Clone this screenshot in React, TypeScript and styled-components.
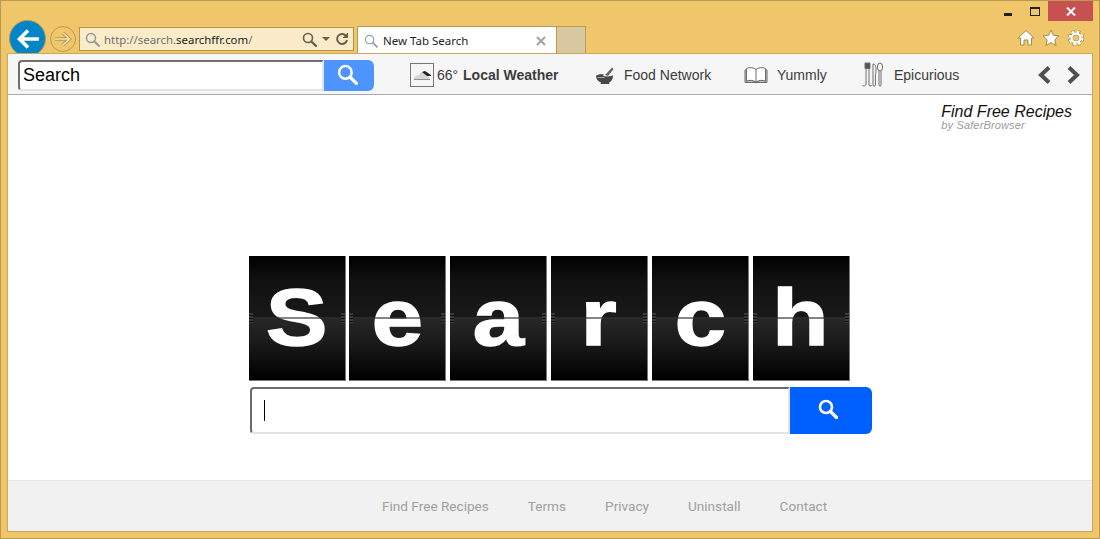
import React from "react";
import styled, { createGlobalStyle } from "styled-components";

const FLIP_LETTERS = ["S", "e", "a", "r", "c", "h"];
const FOOTER_LINKS = ["Find Free Recipes", "Terms", "Privacy", "Uninstall", "Contact"];

const GlobalStyle = createGlobalStyle`
  html, body {
    margin: 0;
    padding: 0;
    overflow: hidden;
  }
  * {
    box-sizing: border-box;
  }
  body {
    font-family: "Liberation Sans", Arial, sans-serif;
  }
`;

const Lens = ({ size, color, width = 2 }: { size: number; color: string; width?: number }) => (
  <svg width={size} height={size} viewBox="0 0 20 20" fill="none" stroke={color}>
    <circle cx="8" cy="8" r="6" strokeWidth={width} />
    <path d="M12.6 12.6 18.5 18.5" strokeWidth={width + 0.8} strokeLinecap="round" />
  </svg>
);

const WeatherIcon = () => (
  <svg width="22" height="22" viewBox="0 0 22 22">
    <path d="M3 14c1-2 3-3 5-3 1-2 3-4 5-3l3 3 3 3v1H3z" fill="#d5d5d5" />
    <path d="M3 15h16v1H3z" fill="#8e8e8e" />
    <path d="M11 8l3-1 6 4v1h-4z" fill="#222" />
  </svg>
);

const MortarIcon = () => (
  <svg width="20" height="20" viewBox="0 0 20 20">
    <path d="M10 10 17 2.500l1.600 1.600L13 11z" fill="#666" />
    <path d="M1 10.500c3-1.400 6-1.400 8-1l-1 1.600 5 .4 5-1c0 4-2 6.200-4 7l.4 1.500H5.600L6 17.500C3 16.500 1 14 1 10.500z" fill="#484848" />
    <path d="M2.500 12h7v1h-7z" fill="#a8a8a8" />
  </svg>
);

const BookIcon = () => (
  <svg width="24" height="18" viewBox="0 0 24 18" fill="#fff" stroke="#6c6c6c" strokeWidth="1">
    <path d="M1 16V4l1.500-.5V15c3-.8 6.500-.8 9.500 1 3-1.800 6.500-1.800 9.500-1V3.500L23 4v12.500H1z" fill="#c8c8c8" />
    <path d="M2.500 15V2.500C6 1 9.500 1.500 12 3.500 14.500 1.500 18 1 21.500 2.500V15c-3-1-6.500-1-9.500 1-3-2-6.500-2-9.500-1z" />
    <path d="M12 3.500V16" />
  </svg>
);

const UtensilsIcon = () => (
  <svg width="22" height="26" viewBox="0 0 22 26" fill="none" stroke="#6e6e6e" strokeWidth="1">
    <path d="M3 1h5v5.500H3z" fill="#555" />
    <path d="M4 6.500V22c0 2-2.500 2.500-3.500 1.500M7 6.500V23c0 1.500 2.500 1.500 2.500 0" />
    <path d="M11 2c2.500 0 3 3 3 6s-.6 4-.6 5V23c0 1.500-2.400 1.500-2.400 0z" />
    <ellipse cx="18" cy="5" rx="2.600" ry="4" />
    <path d="M17 9v14c0 1.500 2 1.500 2 0V9" />
  </svg>
);

const App = () => {
  return (
    <Window>
      <GlobalStyle />
      <Chrome>
        <BackButton>
          <svg width="24" height="22" viewBox="0 0 24 22" fill="none" stroke="#fff" strokeWidth="3.600">
            <path d="M23 11H4M12 2.500 3.500 11l8.500 8.500" />
          </svg>
        </BackButton>
        <ForwardButton>
          <svg width="18" height="16" viewBox="0 0 18 16" fill="none">
            <path d="M1 8h14M9 2l6.500 6L9 14" stroke="#b8974f" strokeWidth="3.400" />
            <path d="M1 8h14M9 2l6.500 6L9 14" stroke="#f6e3b4" strokeWidth="1.600" />
          </svg>
        </ForwardButton>
        <AddressBar>
          <Lens size={15} color="#8f9ba0" />
          <Url>
            http://search.<strong>searchffr.com</strong>/
          </Url>
          <AddressTools>
            <Lens size={15} color="#6a6048" width={2.200} />
            <DropArrow />
            <svg width="14" height="14" viewBox="0 0 14 14" fill="none" stroke="#6a6048" strokeWidth="2">
              <path d="M11.500 4.500A5 5 0 1 0 12 8" />
              <path d="M12.500 1v4.500H8" fill="#6a6048" strokeWidth="1" />
            </svg>
          </AddressTools>
        </AddressBar>
        <Tab>
          <Lens size={14} color="#8f9ba0" width={1.600} />
          <TabTitle>New Tab Search</TabTitle>
          <svg width="10" height="10" viewBox="0 0 10 10" stroke="#a3a3a3" strokeWidth="2">
            <path d="M1 1l8 8M9 1 1 9" />
          </svg>
        </Tab>
        <NewTab />
        <ChromeRight>
          <WindowControls>
            <MinimizeButton>
              <i />
            </MinimizeButton>
            <MaximizeButton>
              <i />
            </MaximizeButton>
            <CloseButton>
              <svg width="10" height="9" viewBox="0 0 10 9" stroke="#fff" strokeWidth="2">
                <path d="M1 .5l8 8M9 .5l-8 8" />
              </svg>
            </CloseButton>
          </WindowControls>
          <BrowserTools>
            <svg width="18" height="18" viewBox="0 0 18 18" fill="#fff" stroke="#a58c52">
              <path d="M9 1.500 17 9h-2.500v7H11v-5H7v5H3.500V9H1z" />
            </svg>
            <svg width="18" height="18" viewBox="0 0 18 18" fill="#fff" stroke="#a58c52">
              <path d="M9 1l2.400 5.300 5.600.6-4.200 3.800 1.200 5.800L9 13.600l-5 2.900 1.200-5.800L1 6.900l5.600-.6z" />
            </svg>
            <svg width="18" height="18" viewBox="0 0 18 18" fill="none">
              <circle cx="9" cy="9" r="6.300" stroke="#a58c52" strokeWidth="3.800" strokeDasharray="3 2" />
              <circle cx="9" cy="9" r="4.500" stroke="#a58c52" strokeWidth="3.400" />
              <circle cx="9" cy="9" r="6.300" stroke="#fff" strokeWidth="2.400" strokeDasharray="2.600 2.350" />
              <circle cx="9" cy="9" r="4.400" stroke="#fff" strokeWidth="2.200" />
            </svg>
          </BrowserTools>
        </ChromeRight>
      </Chrome>

      <Viewport>
        <Toolbar>
          <ToolbarSearch>
            <ToolbarInput>Search</ToolbarInput>
            <ToolbarButton>
              <Lens size={21} color="#fff" width={2.400} />
            </ToolbarButton>
          </ToolbarSearch>
          <WeatherItem>
            <WeatherBox>
              <WeatherIcon />
            </WeatherBox>
            <span>
              66° <b>Local Weather</b>
            </span>
          </WeatherItem>
          <FoodItem>
            <MortarIcon />
            <span>Food Network</span>
          </FoodItem>
          <YummyItem>
            <BookIcon />
            <span>Yummly</span>
          </YummyItem>
          <EpicuriousItem>
            <UtensilsIcon />
            <span>Epicurious</span>
          </EpicuriousItem>
          <Pager>
            <svg width="16" height="20" viewBox="0 0 16 20" fill="none" stroke="#4f4f4f" strokeWidth="4">
              <path d="M13 2.500 5 10l8 7.500" />
            </svg>
            <svg width="16" height="20" viewBox="0 0 16 20" fill="none" stroke="#4f4f4f" strokeWidth="4">
              <path d="M3 2.500 11 10l-8 7.500" />
            </svg>
          </Pager>
        </Toolbar>

        <Page>
          <Attribution>
            <AttributionTitle>Find Free Recipes</AttributionTitle>
            <AttributionBy>by SaferBrowser</AttributionBy>
          </Attribution>
          <Hero>
            <FlipBoard>
              {FLIP_LETTERS.map((letter, i) => (
                <FlipCard key={i}>
                  <FlipLetter>{letter}</FlipLetter>
                  <Hinge />
                </FlipCard>
              ))}
            </FlipBoard>
            <HeroSearch>
              <HeroInput>
                <Caret />
              </HeroInput>
              <HeroButton>
                <Lens size={20} color="#fff" width={2.600} />
              </HeroButton>
            </HeroSearch>
          </Hero>
          <Footer>
            {FOOTER_LINKS.map((link) => (
              <FooterLink key={link}>{link}</FooterLink>
            ))}
          </Footer>
        </Page>
      </Viewport>
    </Window>
  );
};

export default App;

const Window = styled.div`
  display: flex;
  flex-direction: column;
  width: 1100px;
  height: 539px;
  padding: 0 6px 6px;
  background: #efc669;
  border: 1px solid #b89a50;
`;

const Chrome = styled.div`
  display: flex;
  align-items: flex-end;
  height: 52px;
  padding-left: 2px;
  flex-shrink: 0;
`;

const BackButton = styled.div`
  display: flex;
  align-items: center;
  justify-content: center;
  width: 37px;
  height: 37px;
  margin-bottom: -4px;
  border-radius: 50%;
  background: #0085c7;
  border: 1px solid #b8974f;
`;

const ForwardButton = styled.div`
  display: flex;
  align-items: center;
  justify-content: center;
  width: 26px;
  height: 26px;
  margin: 0 0 1px 4px;
  border-radius: 50%;
  border: 1px solid #bb9a52;
`;

const AddressBar = styled.div`
  display: flex;
  align-items: center;
  width: 275px;
  height: 24px;
  margin: 0 0 2px 3px;
  padding: 0 4px 0 5px;
  background: #faebc9;
  border: 1px solid #b5934a;
`;

const Url = styled.div`
  margin-left: 4px;
  font: 11.4px "Noto Sans", sans-serif;
  color: #6f6f6f;

  strong {
    font-weight: 400;
    color: #222;
  }
`;

const AddressTools = styled.div`
  display: flex;
  align-items: center;
  gap: 5px;
  margin-left: auto;
`;

const DropArrow = styled.span`
  width: 0;
  height: 0;
  border: 4px solid transparent;
  border-top-color: #6a6048;
  border-bottom: 0;
`;

const Tab = styled.div`
  display: flex;
  align-items: center;
  width: 200px;
  height: 27px;
  margin-left: 3px;
  padding: 1px 10px 0 6px;
  background: #fff;
  border: 1px solid #b89a50;
  border-bottom: 0;
`;

const TabTitle = styled.span`
  flex: 1;
  margin-left: 5px;
  font: 11.5px "Noto Sans", sans-serif;
  color: #222;
`;

const NewTab = styled.div`
  width: 29px;
  height: 27px;
  background: #d8c8a0;
  border: 1px solid #b89a50;
  border-left: 0;
  border-bottom: 0;
`;

const ChromeRight = styled.div`
  display: flex;
  flex-direction: column;
  align-items: flex-end;
  align-self: stretch;
  margin-left: auto;
`;

const WindowControls = styled.div`
  display: flex;
  align-items: stretch;
  height: 20px;
`;

const MinimizeButton = styled.div`
  width: 26px;
  padding-top: 12px;

  i {
    display: block;
    width: 8px;
    height: 3px;
    background: #222;
  }
`;

const MaximizeButton = styled.div`
  width: 18px;
  padding-top: 6px;

  i {
    display: block;
    width: 10px;
    height: 9px;
    border: 1px solid #222;
    border-top-width: 2px;
  }
`;

const CloseButton = styled.div`
  display: flex;
  align-items: center;
  justify-content: center;
  width: 45px;
  background: #c75050;
`;

const BrowserTools = styled.div`
  display: flex;
  gap: 7px;
  margin-top: 8px;
  padding-right: 8px;
`;

const Viewport = styled.div`
  position: relative;
  z-index: 1;
  display: flex;
  flex-direction: column;
  flex: 1;
  min-height: 0;
  border: 1px solid #c9a85a;
`;

const Toolbar = styled.div`
  position: relative;
  display: flex;
  align-items: center;
  height: 41px;
  padding: 2px 0 0 10px;
  background: #f6f6f6;
  border-bottom: 1px solid #aaa;
  font-size: 14px;
  color: #3c3c3c;

  b {
    margin-left: 1px;
  }
`;

const ToolbarSearch = styled.div`
  display: flex;
  width: 356px;
  height: 31px;
  margin-right: 36px;
`;

const ToolbarInput = styled.div`
  flex: 1;
  padding-left: 3px;
  background: #fff;
  border: 2px solid #6f6f6f;
  border-right-color: #e3e3e3;
  border-bottom-color: #e3e3e3;
  border-radius: 4px 0 0 4px;
  font-size: 18px;
  line-height: 27px;
  color: #000;
`;

const ToolbarButton = styled.div`
  display: flex;
  align-items: center;
  justify-content: center;
  width: 50px;
  padding: 0 4px 2px 0;
  background: #4d94ff;
  border-radius: 0 6px 6px 0;
`;

const WeatherItem = styled.div`
  display: flex;
  align-items: center;
  gap: 3px;
  width: 185px;
`;

const WeatherBox = styled.div`
  display: flex;
  align-items: center;
  justify-content: center;
  width: 24px;
  height: 24px;
  border: 1px solid #777;
`;

const FoodItem = styled.div`
  display: flex;
  align-items: center;
  gap: 9px;
  width: 149px;
`;

const YummyItem = styled.div`
  display: flex;
  align-items: center;
  gap: 9px;
  width: 118px;
`;

const EpicuriousItem = styled.div`
  display: flex;
  align-items: center;
  gap: 10px;
`;

const Pager = styled.div`
  display: flex;
  gap: 14px;
  margin-left: auto;
  padding-right: 10px;
`;

const Page = styled.div`
  display: flex;
  flex-direction: column;
  flex: 1;
  min-height: 0;
  background: #fff;
`;

const Attribution = styled.div`
  align-self: flex-end;
  height: 38px;
  padding: 8px 20px 0 0;
  font-style: italic;
`;

const AttributionTitle = styled.div`
  font-size: 16px;
  line-height: 17px;
  color: #111;
`;

const AttributionBy = styled.div`
  font-size: 11px;
  line-height: 10px;
  letter-spacing: 0.15px;
  color: #9b9b9b;
`;

const Hero = styled.div`
  display: flex;
  flex-direction: column;
  flex: 1;
  margin-top: 123px;
  padding-left: 240.6px;
`;

const FlipBoard = styled.div`
  display: flex;
  justify-content: space-between;
  width: 601px;
`;

const FlipCard = styled.div`
  position: relative;
  display: flex;
  align-items: center;
  justify-content: center;
  width: 97px;
  height: 125px;
  background: linear-gradient(
    #000 0%,
    #111 20%,
    #191919 49%,
    #262626 51%,
    #1a1a1a 70%,
    #000 100%
  );
  border-right: 1px solid #777;
  border-bottom: 1px solid #777;
`;

const FlipLetter = styled.span`
  font-size: 80px;
  font-weight: 700;
  line-height: 1;
  color: #fff;
  transform: scaleX(1.15);
  -webkit-text-stroke: 1.5px #fff;
`;

const Hinge = styled.i`
  position: absolute;
  top: 61px;
  left: 0;
  right: 0;
  height: 2px;
  background: rgba(50, 50, 50, 0.6);

  &::before,
  &::after {
    content: "";
    position: absolute;
    top: -4px;
    width: 4px;
    height: 10px;
    background: repeating-linear-gradient(#3a3a3a 0 2px, #111 2px 3px);
  }

  &::before {
    left: 0;
  }

  &::after {
    right: 0;
  }
`;

const HeroSearch = styled.div`
  display: flex;
  width: 622px;
  height: 47px;
  margin: 6px 0 0 1.4px;
`;

const HeroInput = styled.div`
  display: flex;
  align-items: center;
  flex: 1;
  padding-left: 12px;
  background: #fff;
  border: 2px solid #6b6b6b;
  border-right-color: #e3e3e3;
  border-bottom-color: #e3e3e3;
  border-radius: 4px 0 0 4px;
`;

const Caret = styled.span`
  width: 1px;
  height: 21px;
  background: #000;
`;

const HeroButton = styled.div`
  display: flex;
  align-items: center;
  justify-content: center;
  width: 82px;
  padding: 0 6px 3px 0;
  background: #0060ff;
  border-radius: 0 6px 6px 0;
`;

const Footer = styled.div`
  display: flex;
  align-items: center;
  gap: 39px;
  height: 51px;
  padding-left: 374px;
  background: #f1f1f1;
  border-top: 1px solid #e5e5e5;
`;

const FooterLink = styled.span`
  font: 13.6px Roboto, sans-serif;
  color: #a0a0a0;
`;
